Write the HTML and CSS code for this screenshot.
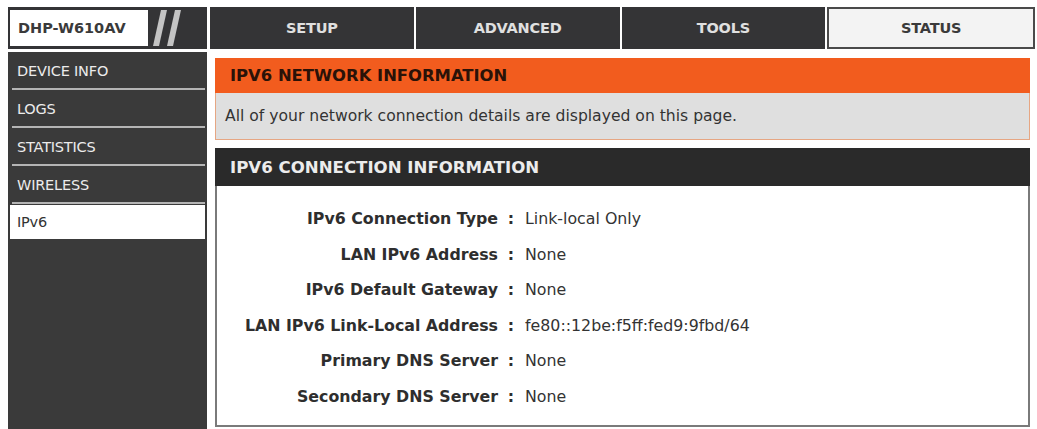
FILE: index.html
```html
<!DOCTYPE html>
<html lang="en">
<head>
  <meta charset="UTF-8" />
  <meta name="viewport" content="width=device-width, initial-scale=1.0" />
  <title>D-Link DHP-W610AV Status</title>
  <link rel="stylesheet" href="styles.css">
</head>
<body>
  <div class="topbar">
    <div class="logo">
      <div class="logo-box">DHP-W610AV</div>
      <svg class="slashes" width="40" height="36" viewBox="0 0 40 36">
        <polygon points="10,0 16,0 8,36 2,36" fill="#c4c4c4" />
        <polygon points="24,0 30,0 22,36 16,36" fill="#c4c4c4" />
      </svg>
    </div>
    <div class="tab">SETUP</div>
    <div class="tab">ADVANCED</div>
    <div class="tab">TOOLS</div>
    <div class="tab active">STATUS</div>
  </div>

  <div class="main">
    <div class="sidebar">
      <div class="menu-item">DEVICE INFO</div>
      <div class="menu-item">LOGS</div>
      <div class="menu-item">STATISTICS</div>
      <div class="menu-item">WIRELESS</div>
      <div class="menu-item current">IPv6</div>
    </div>

    <div class="content">
      <div class="box-title">IPV6 NETWORK INFORMATION</div>
      <div class="box-desc">All of your network connection details are displayed on this page.</div>

      <div class="section-title">IPV6 CONNECTION INFORMATION</div>
      <div class="section-body">
        <div class="row"><div class="label">IPv6 Connection Type</div><div class="colon">:</div><div class="value">Link-local Only</div></div>
        <div class="row"><div class="label">LAN IPv6 Address</div><div class="colon">:</div><div class="value">None</div></div>
        <div class="row"><div class="label">IPv6 Default Gateway</div><div class="colon">:</div><div class="value">None</div></div>
        <div class="row"><div class="label">LAN IPv6 Link-Local Address</div><div class="colon">:</div><div class="value">fe80::12be:f5ff:fed9:9fbd/64</div></div>
        <div class="row"><div class="label">Primary DNS Server</div><div class="colon">:</div><div class="value">None</div></div>
        <div class="row"><div class="label">Secondary DNS Server</div><div class="colon">:</div><div class="value">None</div></div>
      </div>
    </div>
  </div>
</body>
</html>
```

FILE: styles.css
```css
body {
  margin: 0;
  padding: 0;
  background-color: #ffffff;
  font-family: "DejaVu Sans", Verdana, sans-serif;
  color: #333333;
  overflow: hidden;
}
.topbar {
  display: flex;
  gap: 2px;
  margin: 7px 2px 0 8px;
  height: 42px;
}
.logo {
  width: 199px;
  flex: none;
  margin-right: 1px;
  background-color: #343436;
  display: flex;
  align-items: center;
  padding: 3px 2px;
  box-sizing: border-box;
}
.logo-box {
  width: 138px;
  height: 36px;
  background-color: #ffffff;
  display: flex;
  align-items: center;
  padding-left: 8px;
  box-sizing: border-box;
  font-size: 14.5px;
  font-weight: bold;
  color: #3a3a3a;
}
.slashes {
  margin-left: 3px;
}
.tab {
  flex: 1;
  background-color: #343436;
  color: #e0e0e0;
  font-size: 14.5px;
  font-weight: bold;
  letter-spacing: -0.2px;
  display: flex;
  align-items: center;
  justify-content: center;
}
.tab.active {
  background-color: #f3f3f3;
  color: #3a3a3a;
  border: 2px solid #4a4a4a;
}
.main {
  display: flex;
  margin: 3px 7px 0 8px;
}
.sidebar {
  width: 199px;
  flex: none;
  min-height: 380px;
  background-color: #3a3a3a;
  padding: 0 2px;
  box-sizing: border-box;
}
.menu-item {
  height: 34px;
  border-bottom: 2px solid #b4b4b4;
  margin: 0 0 0 2px;
  display: flex;
  align-items: center;
  padding-left: 5px;
  padding-top: 2px;
  box-sizing: content-box;
  font-size: 14.5px;
  letter-spacing: -0.2px;
  color: #ececec;
}
.menu-item.current {
  border-bottom: none;
  background-color: #ffffff;
  color: #333333;
  margin: 1px 0 0 0;
  padding-left: 7px;
  padding-top: 0;
}
.content {
  flex: 1;
  margin: 6px 0 0 8px;
}
.box-title {
  height: 35px;
  background-color: #f25c1e;
  color: #2a1208;
  font-size: 16.4px;
  font-weight: bold;
  display: flex;
  align-items: center;
  padding-left: 15px;
}
.box-desc {
  height: 46px;
  background-color: #dfdfdf;
  border: 1px solid #e6a683;
  border-top: none;
  display: flex;
  align-items: center;
  padding-left: 9px;
  font-size: 15.6px;
  color: #333333;
}
.section-title {
  margin-top: 8px;
  height: 38px;
  background-color: #2a2a2a;
  color: #ececec;
  font-size: 16.6px;
  font-weight: bold;
  display: flex;
  align-items: center;
  padding-left: 15px;
}
.section-body {
  border: 2px solid #7a7a7a;
  border-top: none;
  padding: 15px 0 11px 0;
}
.row {
  display: grid;
  grid-template-columns: 281px 26px 1fr;
  height: 35.5px;
  align-items: center;
}
.label {
  text-align: right;
  font-size: 15.8px;
  font-weight: bold;
  color: #2e2e2e;
}
.colon {
  text-align: center;
  font-size: 15.8px;
  font-weight: bold;
  color: #2e2e2e;
}
.value {
  padding-left: 1px;
  font-size: 15.8px;
  color: #333333;
}
```
